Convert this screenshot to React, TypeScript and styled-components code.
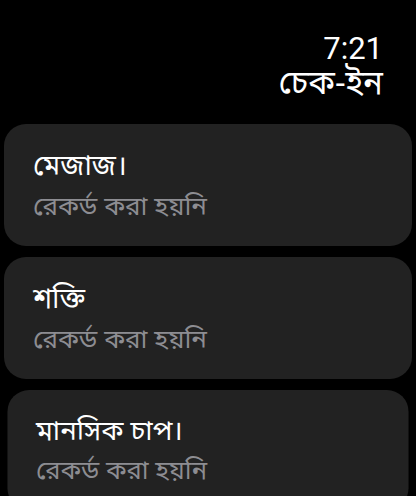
import React from "react";
import styled, { createGlobalStyle } from "styled-components";

const GlobalStyle = createGlobalStyle`
  html, body {
    margin: 0;
    padding: 0;
    background: #000000;
    overflow: hidden;
  }
  body {
    font-family: "Noto Sans Bengali", "Noto Sans", "Roboto", sans-serif;
    color: #ffffff;
  }
`;

const StyledScreen = styled.div`
  width: 416px;
  height: 496px;
  background: #000000;
  display: flex;
  flex-direction: column;
  overflow: hidden;
`;

const StyledHeader = styled.div`
  flex-shrink: 0;
  display: flex;
  flex-direction: column;
  align-items: flex-end;
  padding: 32px 33px 0 0;
  height: 92px;
`;

const StyledTime = styled.div`
  font-family: "Roboto", "Inter", sans-serif;
  font-size: 31px;
  line-height: 34px;
  font-weight: 400;
  color: #ffffff;
`;

const StyledTitle = styled.div`
  font-size: 33px;
  line-height: 40px;
  color: #ffffff;
`;

const StyledList = styled.div`
  flex-shrink: 0;
  display: flex;
  flex-direction: column;
  gap: 11px;
  padding: 0 4px;
`;

const StyledCard = styled.div<{ $scale?: number }>`
  height: 122px;
  flex-shrink: 0;
  background: #222222;
  border-radius: 22px;
  padding: 22px 28px 0 29px;
  box-sizing: border-box;
  display: flex;
  flex-direction: column;
  transform: scale(${(p) => p.$scale ?? 1});
  transform-origin: center top;
`;

const StyledCardTitle = styled.div`
  font-size: 28px;
  line-height: 44px;
  color: #ffffff;
`;

const StyledCardStatus = styled.div`
  font-size: 26px;
  line-height: 38px;
  color: #8d8d92;
`;

const items = [
  { title: "মেজাজ।", scale: 1 },
  { title: "শক্তি", scale: 1 },
  { title: "মানসিক চাপ।", scale: 0.983 },
];

export default function App() {
  return (
    <StyledScreen>
      <GlobalStyle />
      <StyledHeader>
        <StyledTime>7:21</StyledTime>
        <StyledTitle>চেক-ইন</StyledTitle>
      </StyledHeader>
      <StyledList>
        {items.map((item) => (
          <StyledCard key={item.title} $scale={item.scale}>
            <StyledCardTitle>{item.title}</StyledCardTitle>
            <StyledCardStatus>রেকর্ড করা হয়নি</StyledCardStatus>
          </StyledCard>
        ))}
      </StyledList>
    </StyledScreen>
  );
}
